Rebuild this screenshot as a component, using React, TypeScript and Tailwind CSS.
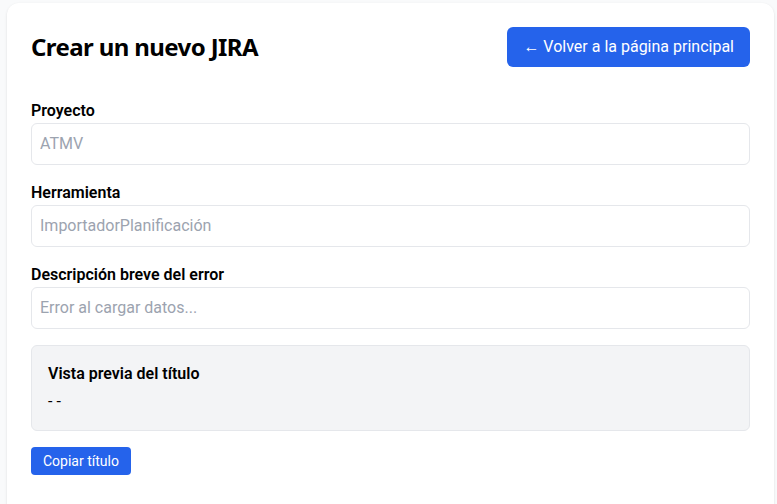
import React, { useState } from "react";

const fields = [
  { id: "proyecto", label: "Proyecto", placeholder: "ATMV" },
  { id: "herramienta", label: "Herramienta", placeholder: "ImportadorPlanificación" },
  { id: "descripcion", label: "Descripción breve del error", placeholder: "Error al cargar datos..." },
];

const App: React.FC = () => {
  const [values, setValues] = useState<Record<string, string>>({});

  const preview = `${values.proyecto || ""} - ${values.herramienta || ""} - ${values.descripcion || ""}`.trim();

  return (
    <div className="min-h-screen bg-[#f9fafb] pl-[7px] pr-[3px] pt-[3px] font-['Roboto',sans-serif] text-black">
      <div className="bg-white rounded-xl shadow-sm p-6 min-h-[520px]">
        <div className="flex items-center justify-between mb-8">
          <h1 className="text-2xl font-bold tracking-tight font-['Noto_Sans',sans-serif]">Crear un nuevo JIRA</h1>
          <button className="bg-[#2563eb] text-white px-4 py-2 rounded-md">← Volver a la página principal</button>
        </div>

        <div className="space-y-4">
          {fields.map((f) => (
            <div key={f.id}>
              <label className="block font-semibold">{f.label}</label>
              <input
                className="w-full border border-[#e5e7eb] rounded-md px-2 py-2 placeholder-[#9ca3af] outline-none"
                placeholder={f.placeholder}
                value={values[f.id] || ""}
                onChange={(e) => setValues({ ...values, [f.id]: e.target.value })}
              />
            </div>
          ))}
        </div>

        <div className="mt-4 bg-[#f3f4f6] border border-[#e5e7eb] rounded-md p-4">
          <h2 className="font-semibold mb-1">Vista previa del título</h2>
          <p>{preview}</p>
        </div>

        <button className="mt-4 bg-[#2563eb] text-white text-sm px-3 py-1 rounded">Copiar título</button>
      </div>
    </div>
  );
};

export default App;
